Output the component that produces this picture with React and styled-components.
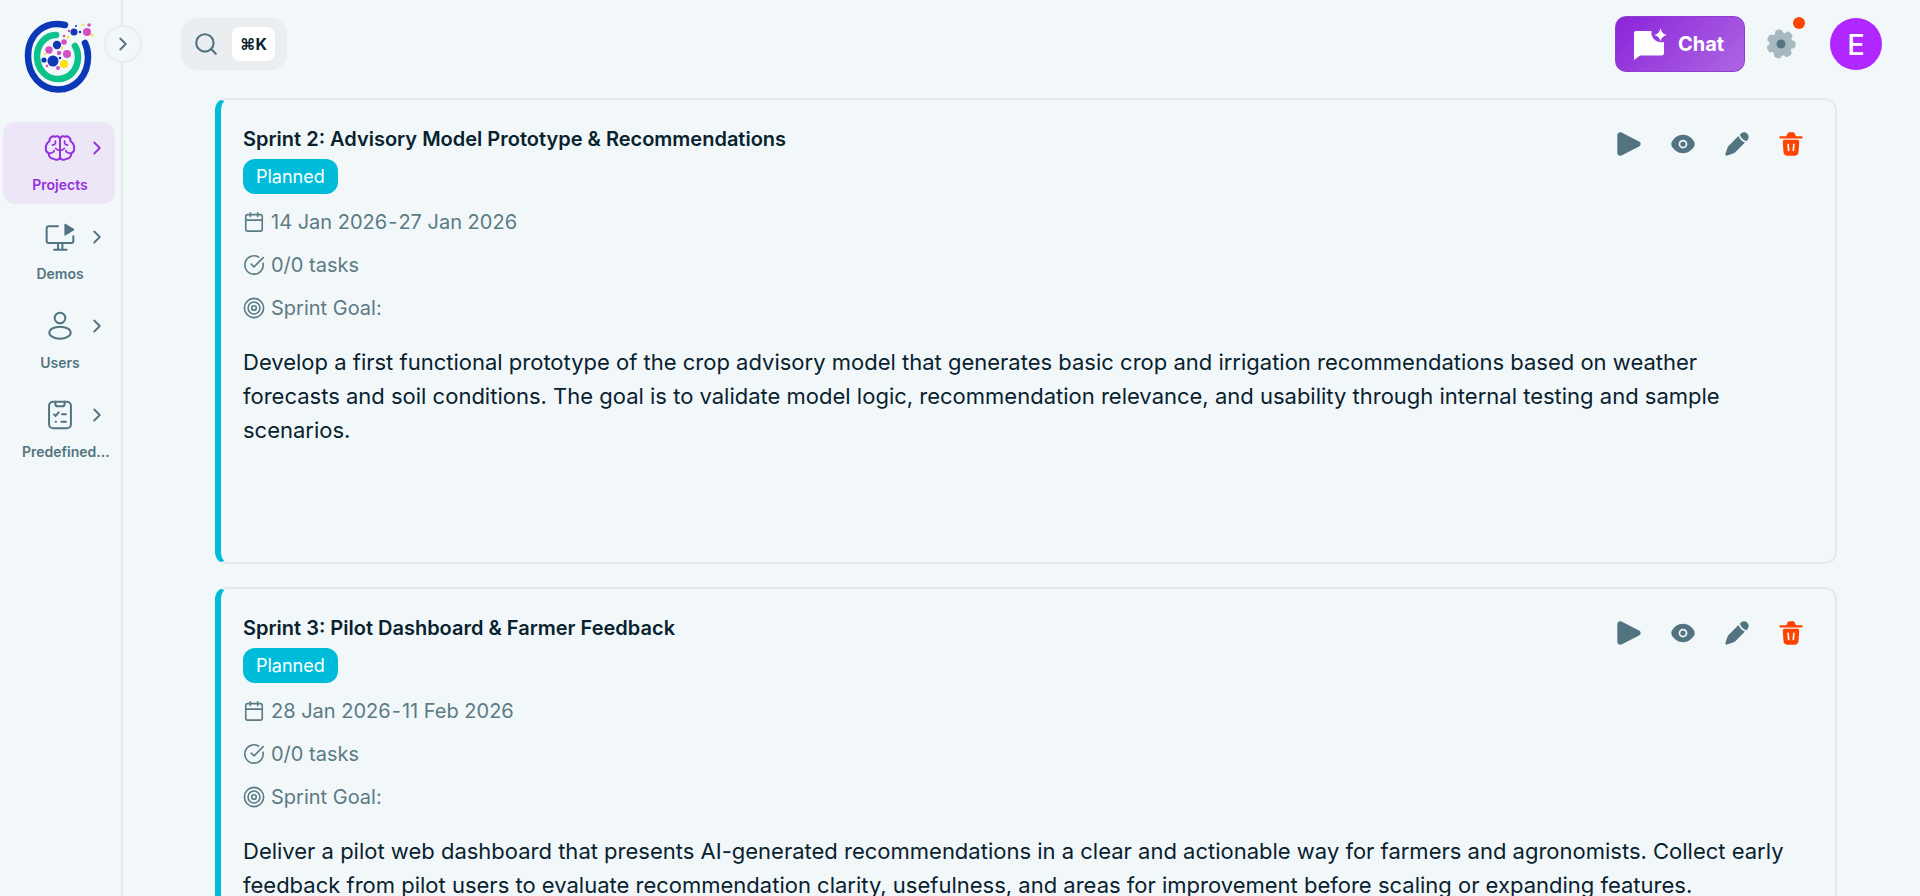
import React from 'react';
import styled, { createGlobalStyle } from 'styled-components';
import { Calendar, ChevronRight, CircleCheckBig, Search } from 'lucide-react';

const color = {
  page: '#f2f7fa',
  line: '#e4e8eb',
  ink: '#08222e',
  muted: '#5b7b84',
  icon: '#527480',
  cyan: '#00bcdb',
  violet: '#9430dc',
  danger: '#ff4300',
};

const GlobalStyle = createGlobalStyle`
  *, *::before, *::after { box-sizing: border-box; }
  body {
    margin: 0;
    background: ${color.page};
    color: ${color.ink};
    font-family: Inter, 'Liberation Sans', sans-serif;
  }
  button { font: inherit; color: inherit; border: 0; padding: 0; background: none; cursor: pointer; }
  h2, p, ul { margin: 0; padding: 0; }
`;

const Shell = styled.div`
  display: flex;
  height: 100vh;
  overflow: hidden;
`;

const Sidebar = styled.aside`
  position: relative;
  flex: none;
  width: 123px;
  border-right: 2px solid ${color.line};
  padding: 20px 6px 0 3px;
`;

const LogoLink = styled.a`
  display: block;
  width: 72px;
  height: 74px;
  margin: 0 0 28px 20px;
  svg { display: block; }
`;

const ExpandButton = styled.button`
  position: absolute;
  top: 25px;
  right: -21px;
  width: 38px;
  height: 38px;
  display: grid;
  place-items: center;
  border: 2px solid #e9edf0;
  border-radius: 50%;
  background: ${color.page};
  color: ${color.icon};
`;

const NavList = styled.ul`
  display: flex;
  flex-direction: column;
  gap: 7px;
  list-style: none;
`;

const NavItem = styled.a`
  display: grid;
  grid-template-columns: 1fr 28px 1fr;
  align-content: start;
  align-items: center;
  justify-items: center;
  gap: 11px 4px;
  height: 82px;
  padding: 10px 0 0 2px;
  border-radius: 12px;
  background: ${(p) => (p.$active ? '#ece6f7' : 'transparent')};
  color: ${(p) => (p.$active ? color.violet : color.icon)};
  text-decoration: none;
  > svg:first-child { grid-column: 2; }
`;

const NavLabel = styled.span`
  grid-column: 1 / -1;
  display: flex;
  justify-content: safe center;
  width: 76px;
  white-space: nowrap;
  font-size: 14px;
  line-height: 20px;
  font-weight: 600;
`;

const Main = styled.div`
  flex: 1;
  min-width: 0;
`;

const TopBar = styled.header`
  display: flex;
  align-items: center;
  height: 88px;
  padding: 0 38px 0 58px;
`;

const SearchButton = styled.button`
  display: flex;
  align-items: center;
  gap: 13px;
  height: 52px;
  padding: 0 12px 0 12px;
  border-radius: 16px;
  background: #eaeef0;
  color: ${color.icon};
`;

const Shortcut = styled.kbd`
  display: grid;
  place-items: center;
  width: 43px;
  height: 34px;
  border-radius: 8px;
  background: #fff;
  color: ${color.ink};
  font: 700 16px/20px Inter, 'DejaVu Sans', sans-serif;
`;

const TopActions = styled.div`
  display: flex;
  align-items: center;
  margin-left: auto;
`;

const ChatButton = styled.button`
  display: flex;
  align-items: center;
  gap: 10px;
  width: 130px;
  height: 56px;
  padding-left: 16px;
  border: 1px solid #8d3fd2;
  border-radius: 11px;
  background: linear-gradient(135deg, #8a24d9, #ae66e3);
  color: #fff;
  font-size: 20px;
  font-weight: 700;
`;

const SettingsButton = styled.button`
  position: relative;
  margin: 0 33px 0 20px;
  width: 32px;
  height: 32px;
  svg { display: block; }
`;

const Dot = styled.span`
  position: absolute;
  top: -11px;
  right: -8px;
  width: 12px;
  height: 12px;
  border-radius: 50%;
  background: ${color.danger};
`;

const Avatar = styled.button`
  width: 52px;
  height: 52px;
  border-radius: 50%;
  background: #b027ff;
  color: #fff;
  font-size: 29px;
  font-weight: 500;
`;

const Sprints = styled.main`
  display: flex;
  flex-direction: column;
  gap: 23px;
  padding: 10px 83px 0 92px;
`;

const Card = styled.article`
  min-height: 466px;
  flex: none;
  padding: 27px 25px 0 22px;
  border: 2px solid #e5e8eb;
  border-left: 6px solid ${color.cyan};
  border-radius: 12px;
`;

const CardHead = styled.div`
  display: flex;
  justify-content: space-between;
  align-items: flex-start;
`;

const Title = styled.h2`
  font-size: 20px;
  line-height: 24px;
  font-weight: 600;
`;

const Badge = styled.span`
  display: inline-block;
  margin-top: 8px;
  padding: 0 13px;
  border-radius: 12px;
  background: ${color.cyan};
  color: #fff;
  font-size: 18px;
  line-height: 35px;
`;

const Actions = styled.div`
  display: flex;
  gap: 26px;
  padding: 3px 5px 0 0;
`;

const IconButton = styled.button`
  display: grid;
  place-items: center;
  width: 28px;
  height: 28px;
  color: ${(p) => (p.$danger ? color.danger : color.icon)};
`;

const MetaList = styled.ul`
  display: flex;
  flex-direction: column;
  gap: 19px;
  margin-top: 16px;
  list-style: none;
`;

const MetaRow = styled.li`
  display: flex;
  align-items: center;
  gap: 6px;
  color: ${color.muted};
  font-size: 20px;
  line-height: 24px;
`;

const DateRange = styled.span`
  display: flex;
  gap: 1px;
`;

const Goal = styled.p`
  margin-top: 25px;
  padding-right: 18px;
  font-size: 22px;
  line-height: 34px;
`;

const Svg = ({ size = 28, children, ...rest }) => (
  <svg width={size} height={size} viewBox="0 0 24 24" fill="currentColor" aria-hidden="true" {...rest}>
    {children}
  </svg>
);

const stroke = { fill: 'none', stroke: 'currentColor', strokeWidth: 1.5, strokeLinecap: 'round', strokeLinejoin: 'round' };

const PlayIcon = () => (
  <Svg><path d="M2 4.600C2 2.400 4 1.400 6 2.400L20.600 9.900C22.500 10.900 22.500 13.100 20.600 14.100L6 21.600C4 22.600 2 21.600 2 19.400Z" /></Svg>
);
const EyeIcon = () => (
  <Svg>
    <path d="M9.75 12a2.25 2.25 0 1 1 4.5 0a2.25 2.25 0 0 1-4.5 0" />
    <path fillRule="evenodd" d="M2 12c0 1.64.425 2.191 1.275 3.296C4.972 17.5 7.818 20 12 20s7.028-2.5 8.725-4.704C21.575 14.192 22 13.639 22 12c0-1.64-.425-2.191-1.275-3.296C19.028 6.5 16.182 4 12 4S4.972 6.5 3.275 8.704C2.425 9.81 2 10.361 2 12m10-3.750a3.750 3.750 0 1 0 0 7.500a3.750 3.750 0 0 0 0-7.500" />
  </Svg>
);
const PenIcon = () => (
  <Svg><path d="m11.4 18.161l7.396-7.396a10.3 10.3 0 0 1-3.326-2.234a10.3 10.3 0 0 1-2.235-3.327L5.839 12.6c-.577.577-.866.866-1.114 1.184a6.6 6.6 0 0 0-.749 1.211c-.173.364-.302.752-.56 1.526l-1.362 4.083a1.06 1.06 0 0 0 1.342 1.342l4.083-1.362c.775-.258 1.162-.387 1.526-.56q.647-.308 1.211-.749c.318-.248.607-.537 1.184-1.114m9.448-9.448a3.932 3.932 0 0 0-5.561-5.561l-.887.887l.038.111a8.75 8.75 0 0 0 2.092 3.32a8.75 8.75 0 0 0 3.431 2.13z" /></Svg>
);
const TrashIcon = () => (
  <Svg>
    <path d="M2 6.300c0-.5.4-.9.9-.9h4.500c.4-.1.700-.4 1-.9l.7-1.400C9.500 2.400 10 2 10.800 2h2.800c.8 0 1.300.4 1.600 1.100l.7 1.400c.3.5.6.8 1 .9h4.200c.5 0 .9.4.9.9s-.4.9-.9.9H2.900A.9.9 0 0 1 2 6.300" />
    <path fillRule="evenodd" d="M11.596 22h.808c2.783 0 4.174 0 5.080-.886c.904-.886.996-2.339 1.181-5.245l.267-4.188c.1-1.577.15-2.366-.303-2.865c-.454-.5-1.220-.5-2.753-.5H8.124c-1.533 0-2.300 0-2.753.5s-.404 1.288-.303 2.865l.267 4.188c.185 2.906.277 4.360 1.182 5.245c.905.886 2.296.886 5.079.886m-1.350-9.811c-.04-.434-.408-.75-.82-.707c-.413.043-.713.43-.672.864l.5 5.263c.04.434.408.75.82.707c.413-.043.713-.43.672-.864zm4.329-.707c.412.043.713.43.671.864l-.5 5.263c-.04.434-.409.75-.82.707c-.413-.043-.713-.43-.672-.864l.5-5.263c.04-.434.409-.75.82-.707" />
  </Svg>
);
const GoalIcon = () => (
  <Svg size={22} {...stroke} strokeWidth="1.75">
    <circle cx="12" cy="12" r="10.500" /><circle cx="12" cy="12" r="6.500" /><circle cx="12" cy="12" r="2.500" />
  </Svg>
);
const BrainIcon = () => (
  <Svg size={32} {...stroke}>
    <path d="M12 5.500C12 3.500 9.800 2.500 8.200 3.600C6 2.600 3.800 4.300 4.200 6.800C2.600 7.700 1.400 9.800 1.400 12C1.200 14 2 15.300 3.600 15.900C3.400 18.500 5.200 20.300 7.300 20C9.300 21.700 12 20.800 12 18.300Z" />
    <path d="M12 5.500C12 3.500 14.200 2.500 15.800 3.600C18 2.600 20.200 4.300 19.800 6.800C21.400 7.700 22.600 9.800 22.600 12C22.800 14 22 15.300 20.400 15.900C20.600 18.500 18.800 20.300 16.700 20C14.700 21.700 12 20.800 12 18.300Z" />
    <path d="M8.500 6.800C9 8.500 8 9.800 6.300 9.800M12 13.800C10.500 13.800 9.400 13.300 8.800 12.300M3.600 15.900C5.800 16.200 7.500 15 7.600 14M15.500 6.800C15 8.500 16 9.800 17.700 9.800M12 13.800C13.500 13.800 14.600 13.300 15.200 12.300M20.400 15.900C18.200 16.200 16.500 15 16.400 14" strokeWidth="1.300" />
  </Svg>
);
const DemoIcon = () => (
  <Svg size={32} {...stroke}>
    <path d="M10.500 4H3.500C2.500 4 2 4.500 2 5.500V15C2 16 2.500 16.500 3.500 16.500H20.500C21.500 16.500 22 16 22 15V11.500M10.500 16.500V21.200M13.800 16.500V21.200M7.500 21.500H17" />
    <path d="M15.800 2.500V10.500L22.300 6.500Z" fill="currentColor" strokeWidth="1" />
  </Svg>
);
const UserIcon = () => (
  <Svg size={32} {...stroke}><circle cx="12" cy="6" r="4" /><ellipse cx="12" cy="17" rx="8" ry="4.500" /></Svg>
);
const ChecklistIcon = () => (
  <Svg size={32} {...stroke}>
    <rect x="3.800" y="2" width="16.400" height="20" rx="3" />
    <path d="M8.500 2V3.500C8.500 5 9.300 5.500 10.300 5.500H13.700C14.700 5.500 15.500 5 15.500 3.500V2M7.500 11.500L8.700 12.700L11 10M13.500 11.500H16.500M13 17H16.500M8.700 17H9" />
  </Svg>
);
const ChatIcon = () => (
  <svg width="36" height="36" viewBox="0 0 36 36" fill="#fff" aria-hidden="true">
    <path d="M4 5H19.500C18.500 11.500 24 17.500 32 16V27C32 28.500 31 29.500 29.500 29.500H8L2 34V7C2 5.800 2.800 5 4 5Z" />
    <path d="M28.500 2Q29.500 8 35 9Q29.500 10 28.500 15.500Q27.500 10 22 9Q27.500 8 28.500 2Z" />
  </svg>
);
const GearIcon = () => (
  <svg width="32" height="32" viewBox="0 0 32 32" aria-hidden="true">
    <circle cx="16" cy="16" r="11.500" fill="#a8b8bf" />
    {[0, 1, 2, 3, 4, 5, 6].map((i) => (
      <rect key={i} x="12" y="1.500" width="8" height="9" rx="3.200" fill="#a8b8bf" transform={`rotate(${-10 + (i * 360) / 7} 16 16)`} />
    ))}
    <circle cx="16" cy="16" r="4.500" fill="#527480" />
  </svg>
);

const dots = [
  [51, 12, 3.5, '#1236b5'], [64, 12, 4, '#d44fc4'], [57, 12, 1.3, '#1236b5'], [66, 5, 1.800, '#d44fc4'], [60, 5, 1.400, '#f8e23c'],
  [53, 6, 1, '#1236b5'], [69, 15, 1.500, '#f8e23c'], [46, 11, 1.300, '#d44fc4'], [45, 17, 1.500, '#f8e23c'], [41, 16, 1.300, '#d44fc4'],
  [34, 25, 4.200, '#1236b5'], [41, 22, 2.800, '#d44fc4'], [26, 30, 3.700, '#d44fc4'], [44, 34, 4, '#d44fc4'], [36, 33, 2.200, '#d44fc4'],
  [30, 41, 5.500, '#1236b5'], [41, 44, 4, '#ffe000'], [21, 40, 2.600, '#1236b5'], [35, 48, 2, '#d44fc4'], [22, 34, 1.300, '#f8e23c'],
  [39, 28, 1.300, '#f8e23c'], [37, 38, 1.300, '#1236b5'], [24, 46, 1.300, '#d44fc4'],
];

const Logo = () => (
  <svg width="74" height="74" viewBox="0 0 74 74" role="img" aria-label="Home" fill="none" strokeLinecap="round" strokeWidth="6.500">
    <path d="M42 5C22 0 5 14 5 36C5 55 18 69.500 35 69.500C53 69.500 65 55 65 37C65 32 64 27 62 23" stroke="#0b38b6" />
    <path d="M33 15C22 15 14 25 14 36C14 49 23 59 35 59C47 59 55 49 55 37C55 32 54 29 52 26" stroke="#0cc28b" />
    {dots.map(([x, y, r, c], i) => <circle key={i} cx={x} cy={y} r={r} fill={c} />)}
  </svg>
);

const nav = [
  { label: 'Projects', Icon: BrainIcon, active: true },
  { label: 'Demos', Icon: DemoIcon },
  { label: 'Users', Icon: UserIcon },
  { label: 'Predefined...', Icon: ChecklistIcon },
];

const sprints = [
  {
    title: 'Sprint 2: Advisory Model Prototype & Recommendations',
    start: '14 Jan 2026',
    end: '27 Jan 2026',
    goal: 'Develop a first functional prototype of the crop advisory model that generates basic crop and irrigation recommendations based on weather forecasts and soil conditions. The goal is to validate model logic, recommendation relevance, and usability through internal testing and sample scenarios.',
  },
  {
    title: 'Sprint 3: Pilot Dashboard & Farmer Feedback',
    start: '28 Jan 2026',
    end: '11 Feb 2026',
    goal: 'Deliver a pilot web dashboard that presents AI-generated recommendations in a clear and actionable way for farmers and agronomists. Collect early feedback from pilot users to evaluate recommendation clarity, usefulness, and areas for improvement before scaling or expanding features.',
  },
];

function SprintCard({ title, start, end, goal }) {
  return (
    <Card>
      <CardHead>
        <div>
          <Title>{title}</Title>
          <Badge>Planned</Badge>
        </div>
        <Actions>
          <IconButton aria-label="Start sprint"><PlayIcon /></IconButton>
          <IconButton aria-label="View sprint"><EyeIcon /></IconButton>
          <IconButton aria-label="Edit sprint"><PenIcon /></IconButton>
          <IconButton aria-label="Delete sprint" $danger><TrashIcon /></IconButton>
        </Actions>
      </CardHead>
      <MetaList>
        <MetaRow>
          <Calendar size={22} strokeWidth={1.75} />
          <DateRange>
            <time>{start}</time>
            <span>-</span>
            <time>{end}</time>
          </DateRange>
        </MetaRow>
        <MetaRow><CircleCheckBig size={22} strokeWidth={1.75} />0/0 tasks</MetaRow>
        <MetaRow><GoalIcon />Sprint Goal:</MetaRow>
      </MetaList>
      <Goal>{goal}</Goal>
    </Card>
  );
}

export default function App() {
  return (
    <Shell>
      <GlobalStyle />
      <Sidebar>
        <LogoLink href="#"><Logo /></LogoLink>
        <ExpandButton aria-label="Expand sidebar"><ChevronRight size={22} /></ExpandButton>
        <nav>
          <NavList>
            {nav.map(({ label, Icon, active }) => (
              <li key={label}>
                <NavItem href="#" $active={active}>
                  <Icon />
                  <ChevronRight size={22} />
                  <NavLabel>{label}</NavLabel>
                </NavItem>
              </li>
            ))}
          </NavList>
        </nav>
      </Sidebar>
      <Main>
        <TopBar>
          <SearchButton aria-label="Search">
            <Search size={26} />
            <Shortcut>⌘K</Shortcut>
          </SearchButton>
          <TopActions>
            <ChatButton><ChatIcon />Chat</ChatButton>
            <SettingsButton aria-label="Settings"><GearIcon /><Dot /></SettingsButton>
            <Avatar aria-label="Account">E</Avatar>
          </TopActions>
        </TopBar>
        <Sprints>
          {sprints.map((s) => <SprintCard key={s.title} {...s} />)}
        </Sprints>
      </Main>
    </Shell>
  );
}
